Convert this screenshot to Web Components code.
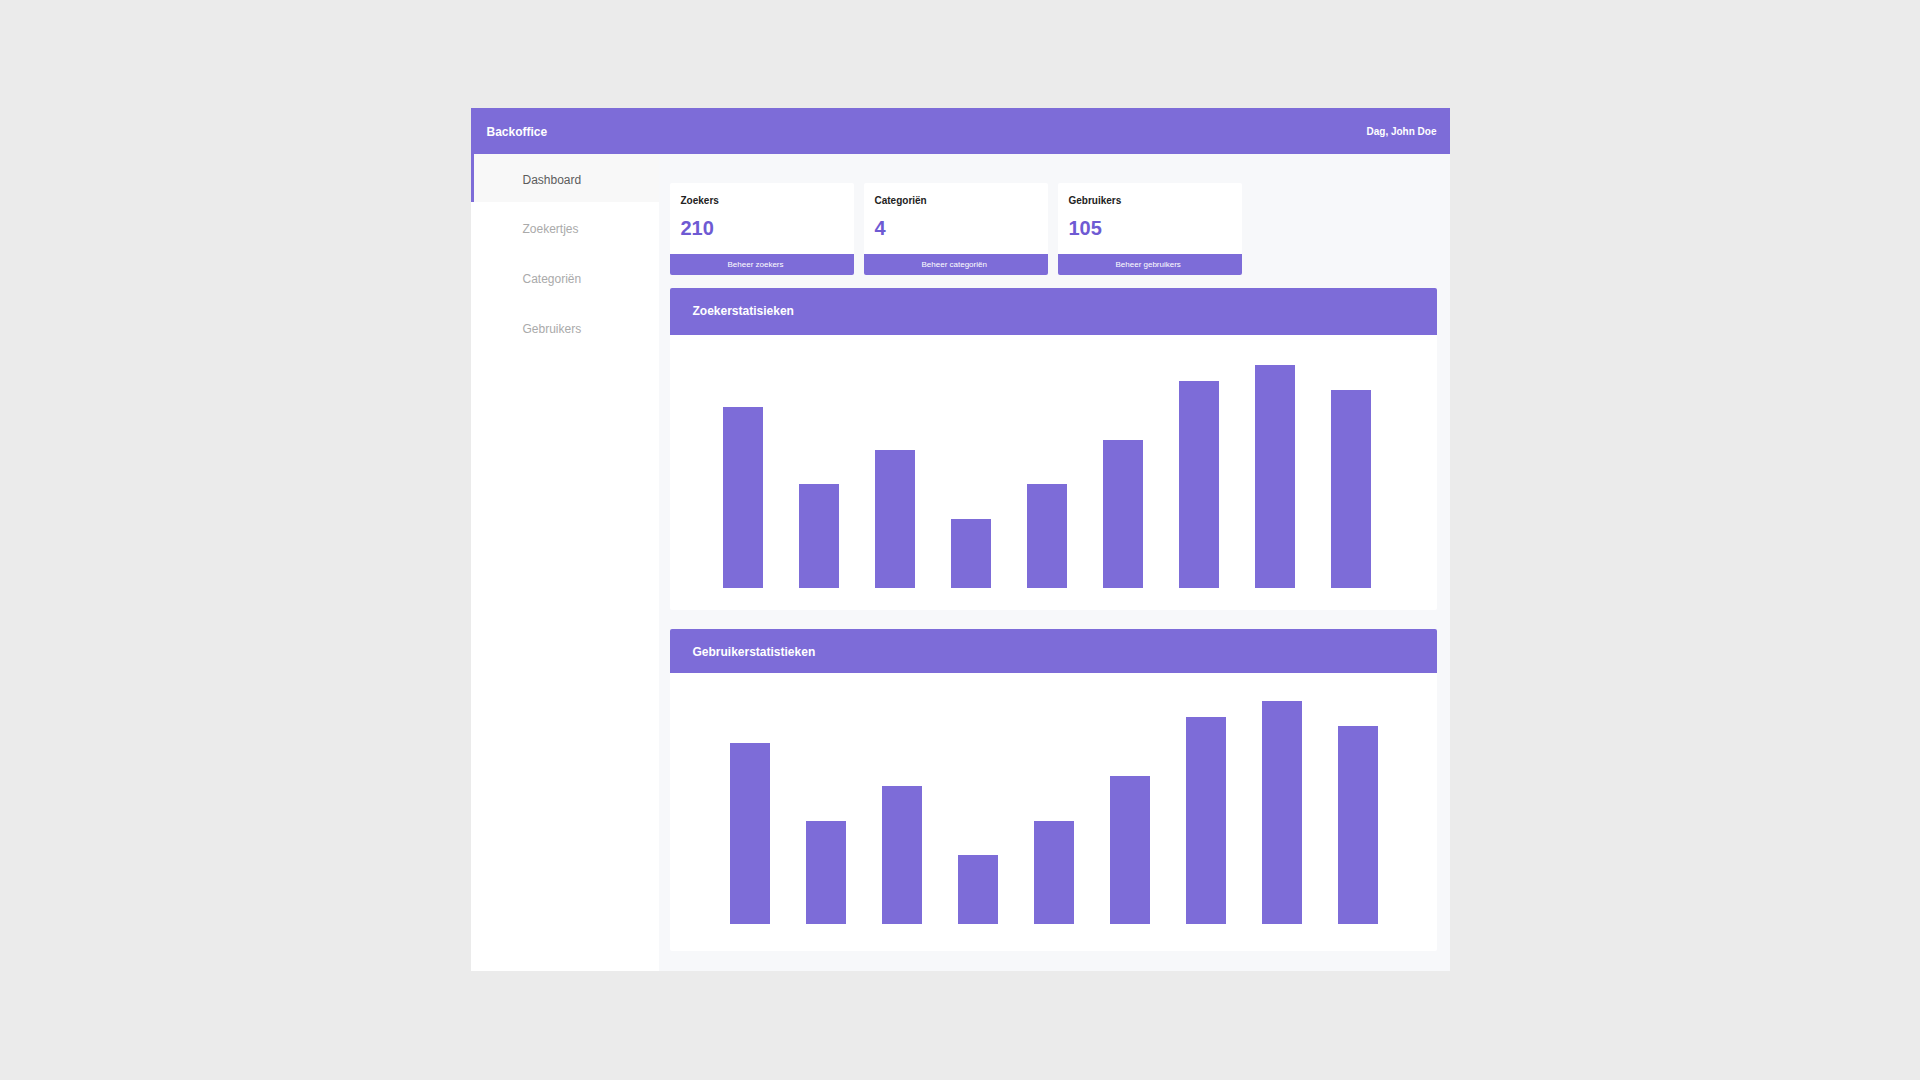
<!DOCTYPE html>
<html lang="nl">
<head>
<meta charset="utf-8">
<meta name="viewport" content="width=device-width, initial-scale=1">
<title>Backoffice</title>
<style>
  :root {
    --accent: #7d6cd8;
    --accent-strong: #6e5ad3;
    --surface: #ffffff;
    --canvas: #f7f8fa;
  }
  body {
    margin: 0;
    background: #ebebeb;
    font-family: "Liberation Sans", Arial, sans-serif;
    font-size: 12px;
    line-height: 16px;
    color: #222;
  }
</style>
</head>
<body>
<bo-app>
  <bo-header slot="header" user="John Doe">Backoffice</bo-header>
  <bo-nav slot="nav">
    <bo-nav-item href="#dashboard" current>Dashboard</bo-nav-item>
    <bo-nav-item href="#zoekertjes">Zoekertjes</bo-nav-item>
    <bo-nav-item href="#categorien">Categoriën</bo-nav-item>
    <bo-nav-item href="#gebruikers">Gebruikers</bo-nav-item>
  </bo-nav>
  <bo-stats>
    <bo-stat label="Zoekers" value="210" href="#zoekers">Beheer zoekers</bo-stat>
    <bo-stat label="Categoriën" value="4" href="#categorien">Beheer categoriën</bo-stat>
    <bo-stat label="Gebruikers" value="105" href="#gebruikers">Beheer gebruikers</bo-stat>
  </bo-stats>
  <bo-panel class="searches" heading="Zoekerstatisieken">
    <bo-bars values="181,104,138,69,104,148,207,223,198"></bo-bars>
  </bo-panel>
  <bo-panel class="users" heading="Gebruikerstatistieken">
    <bo-bars values="181,103,138,69,103,148,207,223,198"></bo-bars>
  </bo-panel>
</bo-app>

<script>
class Base extends HTMLElement {
  constructor() {
    super();
    this.attachShadow({ mode: "open" });
  }
  connectedCallback() {
    this.shadowRoot.innerHTML = this.render();
  }
}

customElements.define("bo-app", class extends Base {
  render() {
    return `
      <style>
        :host { display: block; max-width: 979px; margin: 108px auto; background: var(--canvas); }
        .body { display: grid; grid-template-columns: 188px minmax(0, 1fr); }
        main { padding: 29px 13px 20px 11px; }
        ::slotted(bo-panel.searches) { --head-pad: 16px; --chart-pad: 30px 66px 22px 53px; margin-top: 13px; }
        ::slotted(bo-panel.users) { --head-pad: 13px; --chart-pad: 28px 59px 27px 60px; margin-top: 19px; }
      </style>
      <slot name="header"></slot>
      <div class="body">
        <slot name="nav"></slot>
        <main><slot></slot></main>
      </div>`;
  }
});

customElements.define("bo-header", class extends Base {
  render() {
    return `
      <style>
        :host { display: block; background: var(--accent); color: #fff; }
        header { display: flex; justify-content: space-between; padding: 16px 13px 14px 16px; font-weight: bold; }
        h1 { margin: 0; font-size: 12px; }
        span { font-size: 10px; }
      </style>
      <header><h1><slot></slot></h1><span>Dag, ${this.getAttribute("user")}</span></header>`;
  }
});

customElements.define("bo-nav", class extends Base {
  render() {
    return `
      <style>
        :host { display: block; background: var(--surface); }
        nav { display: flex; flex-direction: column; }
      </style>
      <nav aria-label="Hoofdmenu"><slot></slot></nav>`;
  }
});

customElements.define("bo-nav-item", class extends Base {
  render() {
    const current = this.hasAttribute("current") ? 'aria-current="page"' : "";
    return `
      <style>
        :host { display: block; }
        a { display: block; padding: 19px 12px 15px 49px; border-left: 3px solid transparent; color: #aaa; text-decoration: none; }
        a[aria-current] { padding-top: 18px; padding-bottom: 14px; border-left-color: var(--accent); background: #f8f8f8; background-clip: padding-box; color: #5c5c5c; }
      </style>
      <a href="${this.getAttribute("href")}" ${current}><slot></slot></a>`;
  }
});

customElements.define("bo-stats", class extends Base {
  render() {
    return `
      <style>
        :host { display: flex; gap: 10px; }
        ::slotted(*) { flex: 0 1 184px; }
      </style>
      <slot></slot>`;
  }
});

customElements.define("bo-stat", class extends Base {
  render() {
    return `
      <style>
        :host { display: block; overflow: hidden; border-radius: 2px; background: var(--surface); }
        .info { padding: 12px 11px 14px; }
        h2 { margin: 0 0 9px; font-size: 10px; line-height: 12px; }
        p { margin: 0; font-size: 20px; line-height: 24px; font-weight: bold; color: var(--accent-strong); }
        a { display: block; padding: 6px 0 5px 58px; background: var(--accent); color: #fff; font-size: 8px; line-height: 10px; text-decoration: none; }
      </style>
      <div class="info">
        <h2>${this.getAttribute("label")}</h2>
        <p>${this.getAttribute("value")}</p>
      </div>
      <a href="${this.getAttribute("href")}"><slot></slot></a>`;
  }
});

customElements.define("bo-panel", class extends Base {
  render() {
    return `
      <style>
        :host { display: block; overflow: hidden; border-radius: 2px; background: var(--surface); }
        h2 { margin: 0; padding: 15px 23px var(--head-pad); background: var(--accent); color: #fff; font-size: 12px; }
        .chart { padding: var(--chart-pad); }
      </style>
      <section>
        <h2>${this.getAttribute("heading")}</h2>
        <div class="chart"><slot></slot></div>
      </section>`;
  }
});

customElements.define("bo-bars", class extends Base {
  render() {
    const bars = this.getAttribute("values").split(",")
      .map(v => `<i style="height:${v}px"></i>`).join("");
    return `
      <style>
        :host { display: grid; grid-auto-flow: column; grid-auto-columns: minmax(0, 1fr); gap: 36px; align-items: end; }
        i { background: var(--accent); }
      </style>${bars}`;
  }
});
</script>
</body>
</html>
